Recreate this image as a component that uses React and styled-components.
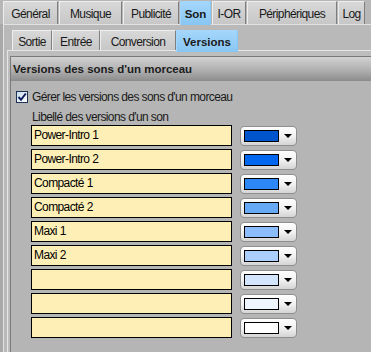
import React from "react";
import styled, { createGlobalStyle } from "styled-components";

const Global = createGlobalStyle`
  html, body { margin: 0; padding: 0; background: #b5b5b5; }
  body { font-family: "Liberation Sans", Arial, sans-serif; }
`;

const Screen = styled.div`
  width: 371px;
  height: 352px;
  overflow: hidden;
  background: #b7b7b7;
  display: flex;
  flex-direction: column;
  font-family: "Liberation Sans", Arial, sans-serif;
  color: #1a1a1a;
`;

const TopTabBar = styled.div`
  display: flex;
  align-items: flex-start;
  height: 24px;
  box-sizing: border-box;
  padding: 1px 0 0 3px;
  gap: 1px;
  position: relative;
  z-index: 2;
`;

const SubTabBar = styled(TopTabBar)`
  height: 20px;
  padding: 0 0 0 5px;
  gap: 0;
`;

const Tab = styled.div`
  box-sizing: border-box;
  width: ${(p) => p.$w}px;
  height: ${(p) => (p.$active ? p.$h + p.$ext : p.$h)}px;
  margin-bottom: ${(p) => (p.$active ? -p.$ext : 0)}px;
  display: flex;
  align-items: center;
  justify-content: center;
  font-size: ${(p) => (p.$active ? "11.5px" : "12px")};
  letter-spacing: ${(p) => (p.$active ? "0" : "-0.6px")};
  font-weight: ${(p) => (p.$active ? 700 : 400)};
  padding-top: ${(p) => (p.$active ? 0 : 2)}px;
  background: ${(p) =>
    p.$active
      ? "linear-gradient(#a4d6fb, #88c6f3)"
      : "linear-gradient(#d8d8d8, #c7c7c7)"};
  border-top: 1px solid ${(p) => (p.$active ? "#a4d6fb" : "#eeeeee")};
  border-left: 1px solid ${(p) => (p.$active ? "#a4d6fb" : "#eeeeee")};
  border-right: 1px solid ${(p) => (p.$active ? "#88c6f3" : "#7e7e7e")};
  white-space: nowrap;
`;

const OuterPanel = styled.div`
  flex: 1;
  display: flex;
  flex-direction: column;
  margin-left: 3px;
  border-top: 1px solid #e2e2e2;
  border-left: 1px solid #e2e2e2;
  box-shadow: -3px 0 0 #a9a9a9;
  padding: 5px 0 0 3px;
  background: #b9b9b9;
`;

const InnerPanel = styled.div`
  flex: 1;
  display: flex;
  flex-direction: column;
  border-top: 1px solid #e6e6e6;
  border-left: 1px solid #e6e6e6;
  padding: 5px 0 0 2px;
  background: #bdbdbd;
`;

const InnerFrame = styled.div`
  flex: 1;
  display: flex;
  flex-direction: column;
  border-top: 1px solid #7a7a7a;
  border-left: 1px solid #7a7a7a;
  background: #b5b5b5;
`;

const Header = styled.div`
  height: 24px;
  display: flex;
  align-items: center;
  padding-left: 2px;
  font-size: 11.5px;
  font-weight: 700;
  color: #1c1c1c;
  background: linear-gradient(#d2d2d2, #b0b0b0 55%, #8c8c8c);
`;

const Body = styled.div`
  display: flex;
  flex-direction: column;
  padding-top: 9px;
`;

const CheckRow = styled.label`
  display: flex;
  align-items: center;
  gap: 4px;
  height: 14px;
  padding-left: 5px;
  font-size: 12px;
  letter-spacing: -0.6px;
`;

const CheckBox = styled.span`
  box-sizing: border-box;
  width: 12px;
  height: 12px;
  border: 1px solid #1d3153;
  background: linear-gradient(135deg, #c9dcf0, #ffffff);
  display: flex;
  align-items: center;
  justify-content: center;
`;

const Caption = styled.div`
  height: 14px;
  margin-top: 6px;
  padding-left: 21px;
  display: flex;
  align-items: center;
  font-size: 12px;
  letter-spacing: -0.6px;
`;

const FieldList = styled.div`
  display: flex;
  flex-direction: column;
  gap: 3px;
  margin-top: 1px;
  padding-left: 20px;
`;

const FieldRow = styled.div`
  display: flex;
  align-items: center;
  gap: 8px;
  height: 21px;
`;

const NameBox = styled.div`
  box-sizing: border-box;
  width: 201px;
  height: 21px;
  border: 1px solid #000;
  background: #feefb6;
  padding: 0 2px 2px;
  display: flex;
  align-items: center;
  font-size: 12px;
  letter-spacing: -0.6px;
  color: #000;
`;

const ColorButton = styled.div`
  box-sizing: border-box;
  width: 57px;
  height: 20px;
  border: 1px solid #8f8f8f;
  border-radius: 4px;
  background: linear-gradient(#ffffff, #f2f2f2 50%, #d4d4d4);
  display: flex;
  align-items: center;
  padding-left: 3px;
  gap: 5px;
`;

const Swatch = styled.span`
  box-sizing: border-box;
  width: 35px;
  height: 12px;
  border: 1px solid #000;
  background: ${(p) => p.$color};
`;

const topTabs = [
  { label: "Général", w: 55 },
  { label: "Musique", w: 63 },
  { label: "Publicité", w: 56 },
  { label: "Son", w: 31, active: true },
  { label: "I-OR", w: 34 },
  { label: "Périphériques", w: 90 },
  { label: "Log", w: 27 },
];

const subTabs = [
  { label: "Sortie", w: 40 },
  { label: "Entrée", w: 48 },
  { label: "Conversion", w: 76 },
  { label: "Versions", w: 62, active: true },
];

const rows = [
  { name: "Power-Intro 1", color: "#0055cc" },
  { name: "Power-Intro 2", color: "#0067ee" },
  { name: "Compacté 1", color: "#2c88f6" },
  { name: "Compacté 2", color: "#66aaf6" },
  { name: "Maxi 1", color: "#8cbdfb" },
  { name: "Maxi 2", color: "#abcefd" },
  { name: "", color: "#d3e5fd" },
  { name: "", color: "#eff5fe" },
  { name: "", color: "#ffffff" },
];

export default function App() {
  return (
    <>
      <Global />
      <Screen>
        <TopTabBar>
          {topTabs.map((t) => (
            <Tab key={t.label} $w={t.w} $h={23} $ext={1} $active={t.active}>
              {t.label}
            </Tab>
          ))}
        </TopTabBar>
        <OuterPanel>
          <SubTabBar>
            {subTabs.map((t) => (
              <Tab key={t.label} $w={t.w} $h={20} $ext={2} $active={t.active}>
                {t.label}
              </Tab>
            ))}
          </SubTabBar>
          <InnerPanel>
            <InnerFrame>
              <Header>Versions des sons d'un morceau</Header>
              <Body>
                <CheckRow>
                  <CheckBox>
                    <svg width="10" height="10" viewBox="0 0 10 10">
                      <path
                        d="M1.5 5 L4 7.8 L8.8 1.5"
                        fill="none"
                        stroke="#0b1e5c"
                        strokeWidth="2"
                      />
                    </svg>
                  </CheckBox>
                  Gérer les versions des sons d'un morceau
                </CheckRow>
                <Caption>Libellé des versions d'un son</Caption>
                <FieldList>
                  {rows.map((r, i) => (
                    <FieldRow key={i}>
                      <NameBox>{r.name}</NameBox>
                      <ColorButton>
                        <Swatch $color={r.color} />
                        <svg width="8" height="4" viewBox="0 0 8 4">
                          <polygon points="0,0 8,0 4,4" fill="#000" />
                        </svg>
                      </ColorButton>
                    </FieldRow>
                  ))}
                </FieldList>
              </Body>
            </InnerFrame>
          </InnerPanel>
        </OuterPanel>
      </Screen>
    </>
  );
}
